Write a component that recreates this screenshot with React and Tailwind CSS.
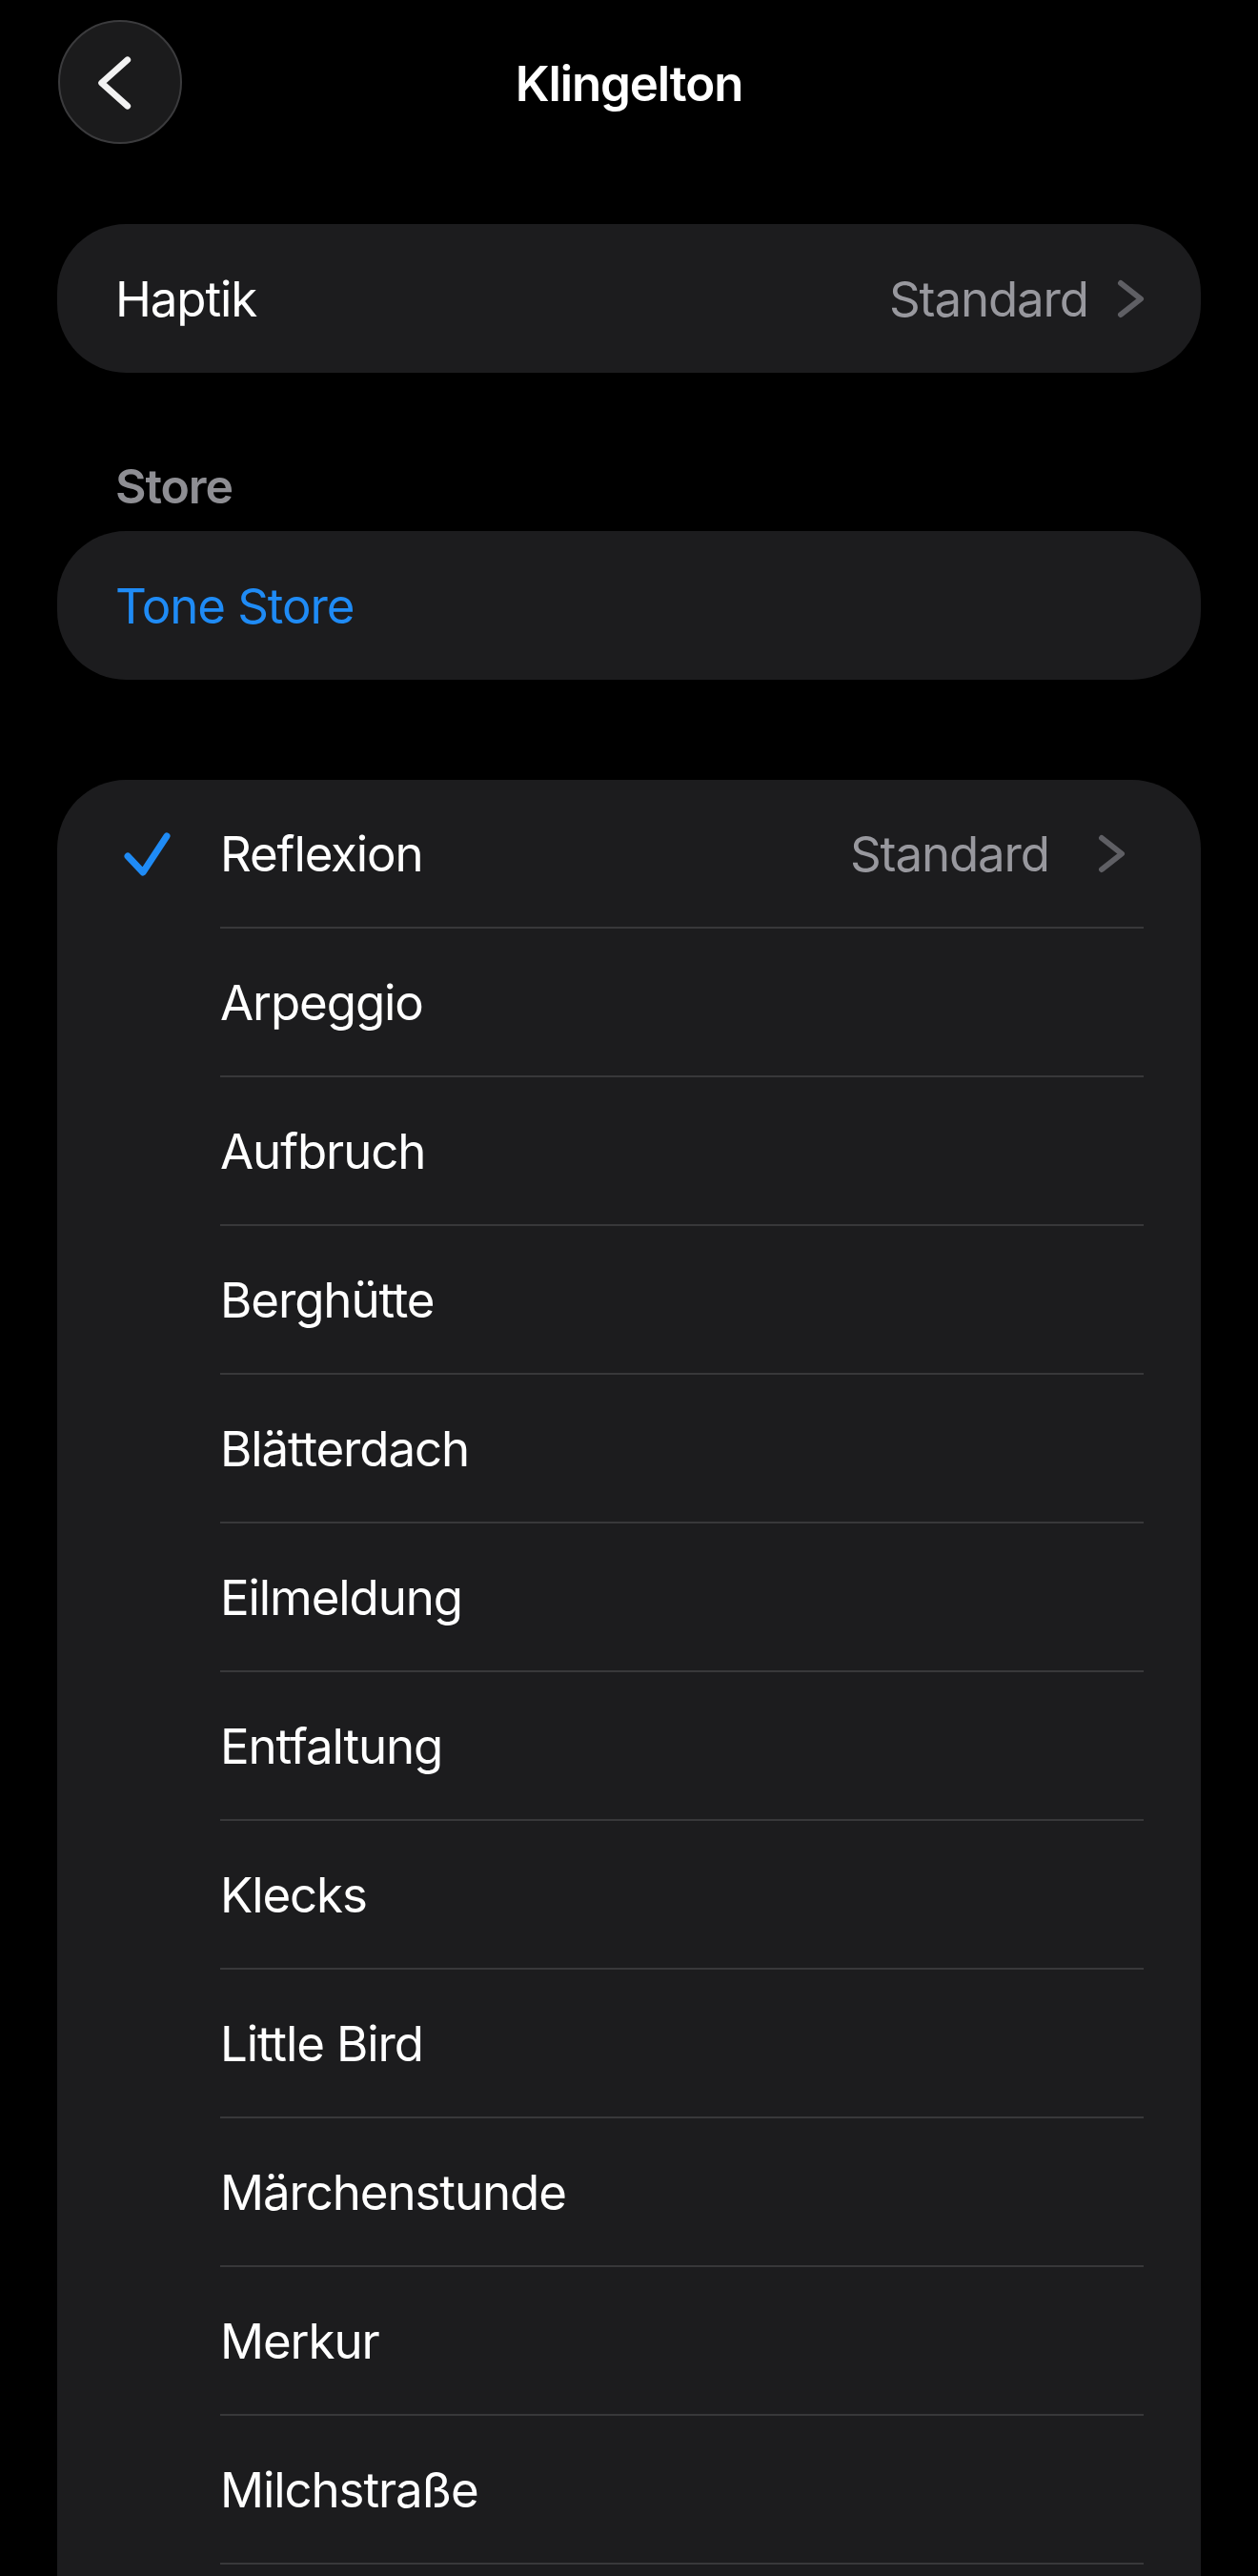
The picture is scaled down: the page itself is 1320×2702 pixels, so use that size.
import React from 'react';

const TONES = [
  'Reflexion',
  'Arpeggio',
  'Aufbruch',
  'Berghütte',
  'Blätterdach',
  'Eilmeldung',
  'Entfaltung',
  'Klecks',
  'Little Bird',
  'Märchenstunde',
  'Merkur',
  'Milchstraße',
  'Nachtvogel',
];

function Chevron() {
  return (
    <svg width="29" height="41" viewBox="0 0 29 41" fill="none" className="shrink-0">
      <polyline
        points="4,4 25,20.5 4,37"
        stroke="#5f5f64"
        strokeWidth="6"
        strokeLinecap="round"
        strokeLinejoin="round"
      />
    </svg>
  );
}

function Check() {
  return (
    <svg width="171" height="60" viewBox="0 0 171 60" fill="none">
      <polyline
        points="74,33 90,50 115,12"
        stroke="#1f8bf5"
        strokeWidth="7"
        strokeLinecap="round"
        strokeLinejoin="round"
      />
    </svg>
  );
}

function ToneRow({ name, selected }) {
  return (
    <div className="flex h-[156px] items-stretch">
      <div className="flex w-[171px] shrink-0 items-center pb-[2px]">
        {selected && <Check />}
      </div>
      <div className="mr-[60px] flex flex-1 items-center justify-between border-b-2 border-[#38383a] pr-[19px]">
        <span className="text-white">{name}</span>
        {selected && (
          <div className="flex items-center gap-[51px]">
            <span className="text-[#98989e]">Standard</span>
            <Chevron />
          </div>
        )}
      </div>
    </div>
  );
}

export default function App() {
  return (
    <div className="h-[2702px] overflow-hidden bg-black font-['Inter',sans-serif] text-[51px] leading-none tracking-[-1.1px]">
      {/* Header */}
      <div className="relative flex h-[172px] items-start px-[61px] pt-[21px]">
        <button className="flex h-[130px] w-[130px] items-center justify-center rounded-full border-2 border-[#3b3b3d] bg-[#1b1b1c]">
          <svg width="130" height="130" viewBox="0 0 130 130" fill="none">
            <polyline
              points="73,41 45,66 73,91"
              stroke="#f2f2f2"
              strokeWidth="7"
              strokeLinecap="round"
              strokeLinejoin="round"
            />
          </svg>
        </button>
        <h1 className="absolute left-0 right-0 top-[62px] text-center font-semibold text-white">Klingelton</h1>
      </div>

      <div className="px-[60px]">
        {/* Haptik */}
        <div className="mt-[63px] flex h-[156px] items-center justify-between rounded-[72px] bg-[#1c1c1e] pl-[61px] pr-[59px]">
          <span className="text-white">Haptik</span>
          <div className="flex items-center gap-[30px]">
            <span className="text-[#98989e]">Standard</span>
            <Chevron />
          </div>
        </div>

        {/* Store */}
        <div className="mt-[94px] h-[50px] pl-[61px] text-[50px] font-semibold text-[#8e8e93]">Store</div>
        <div className="mt-[22px] flex h-[156px] items-center rounded-[72px] bg-[#1c1c1e] pl-[61px]">
          <span className="text-[#1f8bf5]">Tone Store</span>
        </div>

        {/* Tones */}
        <div className="mt-[105px] rounded-[72px] bg-[#1c1c1e]">
          {TONES.map((name, i) => (
            <ToneRow key={name} name={name} selected={i === 0} />
          ))}
        </div>
      </div>
    </div>
  );
}
